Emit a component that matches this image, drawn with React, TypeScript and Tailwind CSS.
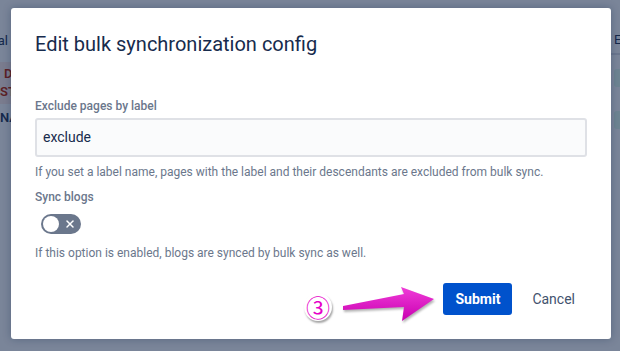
import { X } from 'lucide-react'

function Arrow() {
  return (
    <svg width="100" height="40" viewBox="0 0 100 40" className="absolute left-[338px] top-[284px] drop-shadow-[1px_2px_1px_rgba(0,0,0,0.3)]">
      <defs>
        <linearGradient id="ag" x1="0" y1="0" x2="0" y2="1">
          <stop offset="0" stopColor="#f03cd8" />
          <stop offset="1" stopColor="#c800b0" />
        </linearGradient>
      </defs>
      <polygon points="5,22 66,10 63,3 96,15 64,37 66,23 5,26" fill="url(#ag)" />
    </svg>
  )
}

export default function App() {
  return (
    <div className="relative w-[620px] h-[351px] overflow-hidden bg-white font-['Roboto',sans-serif]">
      {/* page behind the modal */}
      <div className="flex justify-between h-full text-[13px] text-[#253858]">
        <div className="w-[11px] overflow-hidden flex flex-col pt-[32px]">
          <div className="flex justify-end pr-[3px] leading-[18px]">
            <span className="whitespace-nowrap">al</span>
          </div>
          <div className="mt-[12px] w-full bg-[#ffebe6] flex flex-col py-[3px]">
            <span className="pl-[4px] text-[#bf2600] font-semibold leading-[18px]">D</span>
            <span className="text-[#bf2600] font-semibold leading-[18px]">ST</span>
          </div>
          <span className="font-semibold mt-[5px] leading-[18px]">NA</span>
        </div>
        <div className="w-[9px] overflow-hidden pt-[30px]">
          <span className="pl-[3px] leading-[20px]">E</span>
          <div className="mt-[3px] h-[2px] bg-[#dfe1e6]" />
          <div className="ml-[3px] mt-[14px] h-[18px] w-[20px] rounded-[3px] bg-[#e3fcef]" />
          <div className="ml-[3px] mt-[24px] h-[18px] w-[20px] rounded-[3px] bg-[#e3fcef]" />
        </div>
      </div>

      {/* overlay */}
      <div className="absolute inset-0 bg-[#091e42]/[0.54]" />

      {/* modal */}
      <div className="absolute left-[11px] top-[8px] w-[600px] h-[331px] bg-white rounded-[3px] shadow-[0_0_8px_rgba(9,30,66,0.3)] px-[24px] pt-[24px] pb-[24px] flex flex-col">
        <h1 className="text-[20px] leading-[24px] text-[#172b4d] font-normal">Edit bulk synchronization config</h1>

        <label className="mt-[42px] text-[12px] leading-[16px] font-medium text-[#6b778c]">Exclude pages by label</label>
        <div className="mt-[4px] h-[39px] border-2 border-[#dfe1e6] bg-[#fafbfc] rounded-[3px] flex items-center px-[6px] text-[14px] text-[#172b4d]">
          exclude
        </div>
        <p className="mt-[7px] text-[12px] leading-[16px] text-[#6b778c]">
          If you set a label name, pages with the label and their descendants are excluded from bulk sync.
        </p>

        <label className="mt-[9px] text-[12px] leading-[16px] font-medium text-[#6b778c]">Sync blogs</label>
        <div className="mt-[9px] ml-[6px] w-[40px] h-[20px] rounded-full bg-[#6b778c] flex items-center justify-between px-[2px]">
          <span className="w-[16px] h-[16px] rounded-full bg-white" />
          <X size={12} strokeWidth={3} className="text-white mr-[3px]" />
        </div>
        <p className="mt-[11px] text-[12px] leading-[16px] text-[#6b778c]">
          If this option is enabled, blogs are synced by bulk sync as well.
        </p>

        <div className="mt-auto flex justify-end gap-[8px]">
          <button className="h-[32px] px-[12px] rounded-[3px] bg-[#0052cc] text-white text-[14px] font-bold">Submit</button>
          <button className="h-[32px] px-[12px] rounded-[3px] text-[#42526e] text-[14px]">Cancel</button>
        </div>
      </div>

      {/* annotation */}
      <div className="absolute left-[304px] top-[293px] w-[28px] h-[28px] rounded-full bg-white shadow-[1px_2px_2px_rgba(0,0,0,0.35)] flex items-center justify-center text-[#e600c8] text-[24px] leading-none font-['Noto_Sans_CJK_JP',sans-serif]">
        ③
      </div>
      <Arrow />
    </div>
  )
}
